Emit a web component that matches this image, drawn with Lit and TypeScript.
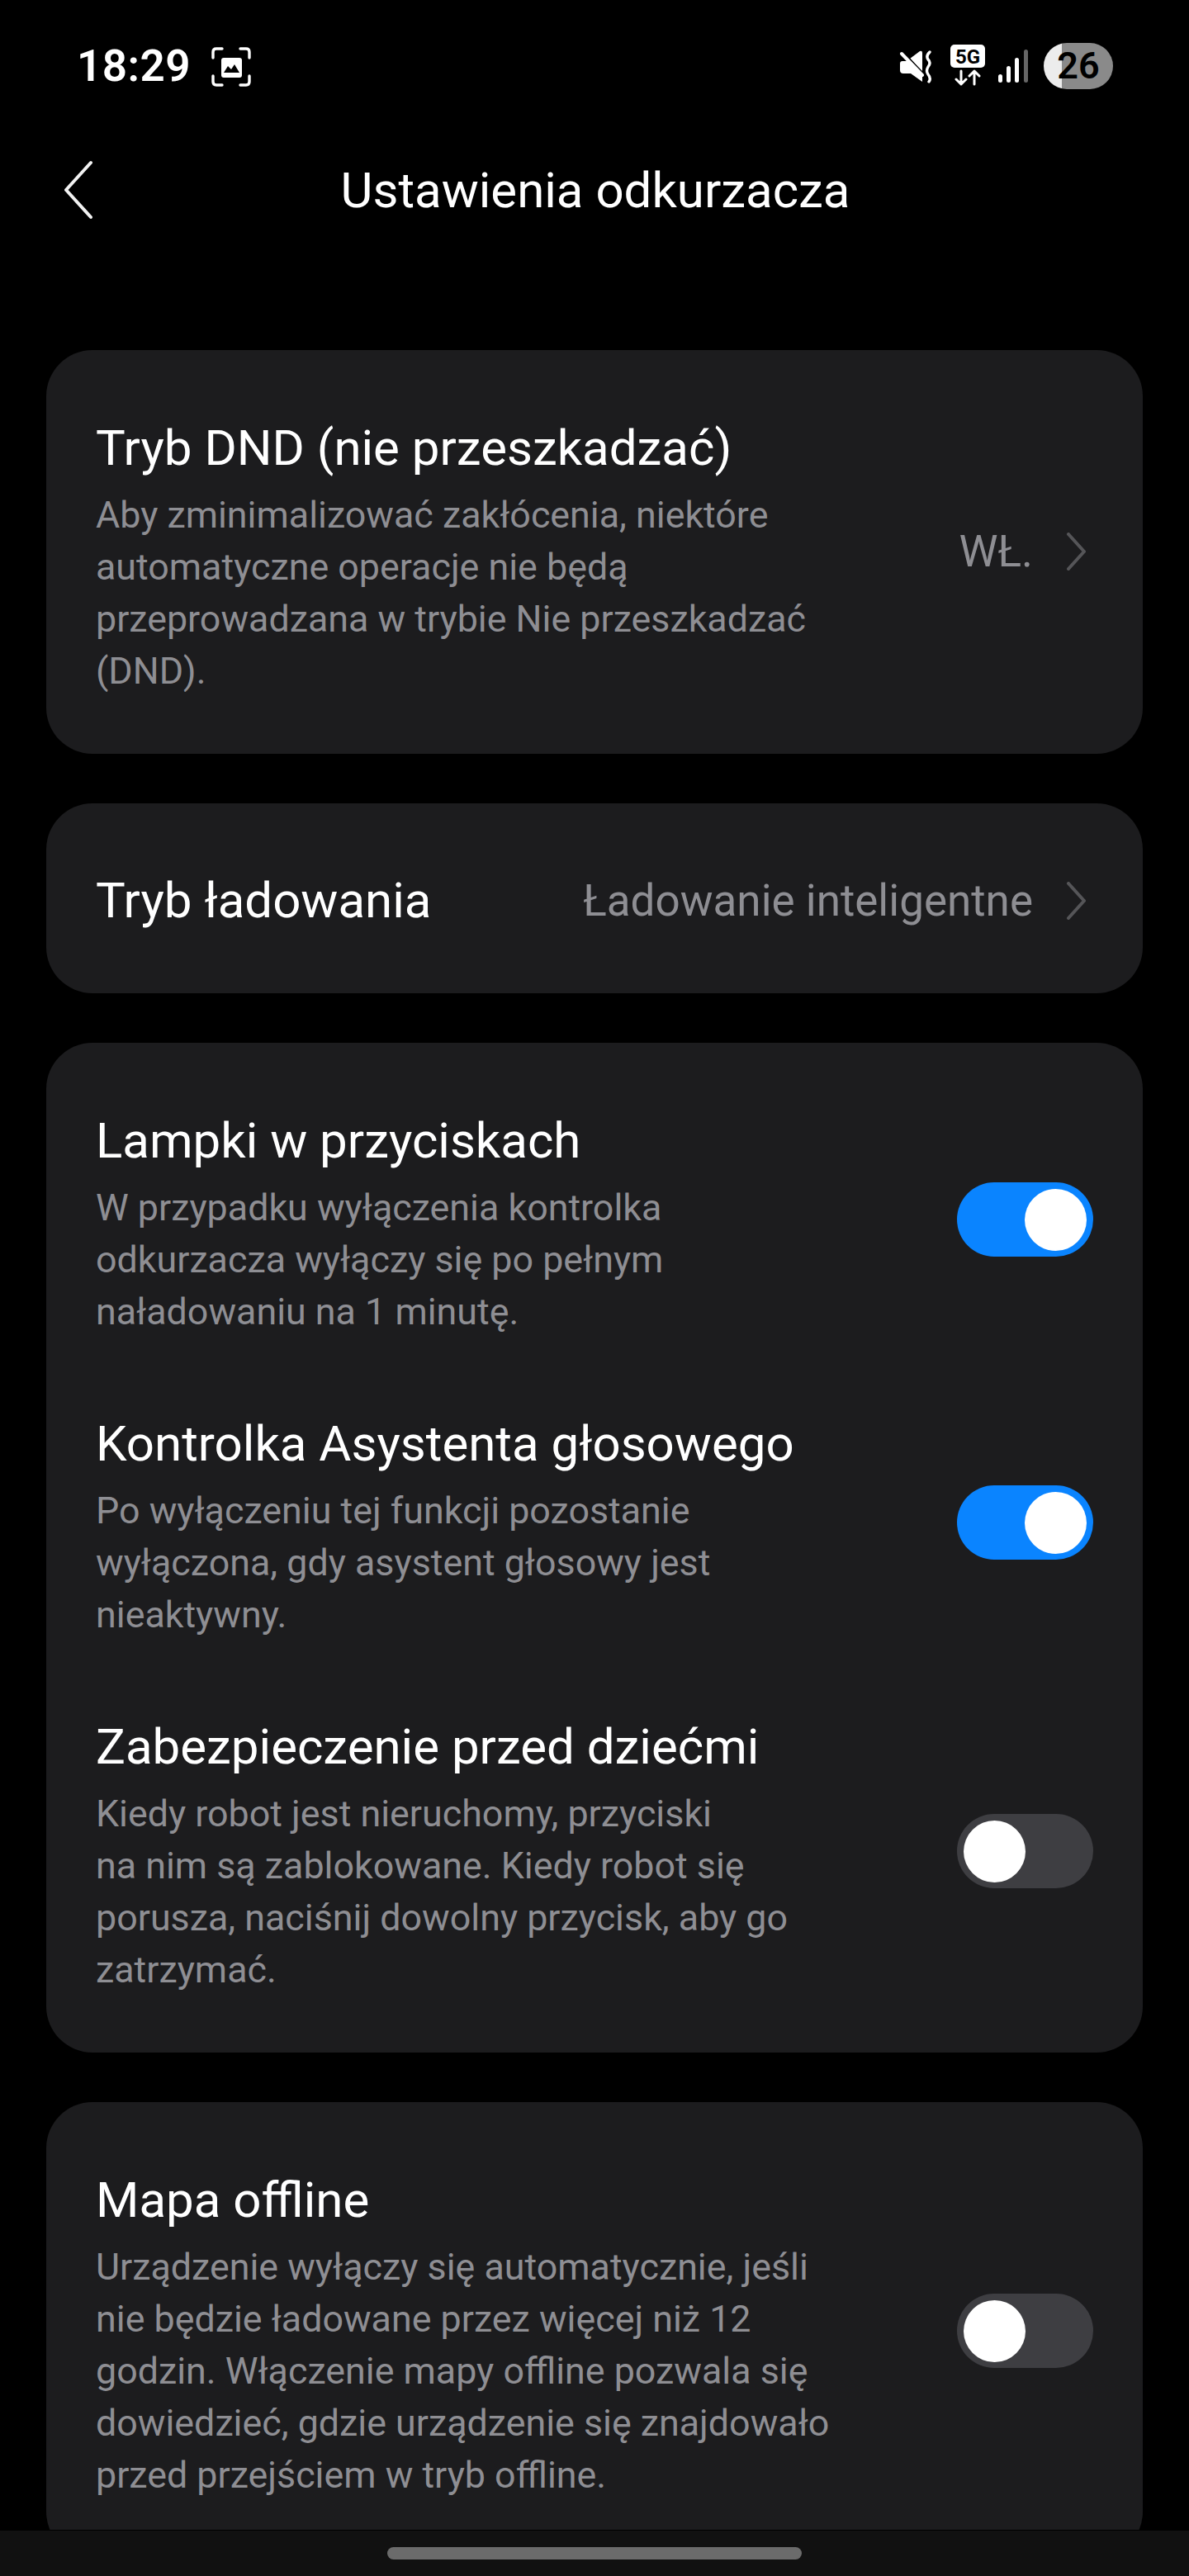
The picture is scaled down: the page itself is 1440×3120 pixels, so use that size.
import { LitElement, html, css, nothing } from "lit";
import { customElement } from "lit/decorators.js";

type Row = { title: string; desc?: string[]; value?: string; toggle?: boolean };

const cards: Row[][] = [
  [{ title: "Tryb DND (nie przeszkadzać)", desc: ["Aby zminimalizować zakłócenia, niektóre", "automatyczne operacje nie będą", "przeprowadzana w trybie Nie przeszkadzać", "(DND)."], value: "WŁ." }],
  [{ title: "Tryb ładowania", value: "Ładowanie inteligentne" }],
  [
    { title: "Lampki w przyciskach", desc: ["W przypadku wyłączenia kontrolka", "odkurzacza wyłączy się po pełnym", "naładowaniu na 1 minutę."], toggle: true },
    { title: "Kontrolka Asystenta głosowego", desc: ["Po wyłączeniu tej funkcji pozostanie", "wyłączona, gdy asystent głosowy jest", "nieaktywny."], toggle: true },
    { title: "Zabezpieczenie przed dziećmi", desc: ["Kiedy robot jest nieruchomy, przyciski", "na nim są zablokowane. Kiedy robot się", "porusza, naciśnij dowolny przycisk, aby go", "zatrzymać."], toggle: false },
  ],
  [{ title: "Mapa offline", desc: ["Urządzenie wyłączy się automatycznie, jeśli", "nie będzie ładowane przez więcej niż 12", "godzin. Włączenie mapy offline pozwala się", "dowiedzieć, gdzie urządzenie się znajdowało", "przed przejściem w tryb offline."], toggle: false }],
];

@customElement("app-root")
export class AppRoot extends LitElement {
  static styles = css`
    :host { display: block; width: 1440px; height: 3120px; background: #000; position: relative; overflow: hidden; font-family: Roboto, "Liberation Sans", sans-serif; color: #fff; }
    .status { height: 171px; display: flex; align-items: flex-start; padding: 52px 92px 0 93px; box-sizing: border-box; }
    .time { font-size: 53px; line-height: 56px; font-weight: 600; letter-spacing: 0.5px; }
    .shot { margin: 5px 0 0 25px; }
    .right { margin-left: auto; display: flex; align-items: flex-start; }
    .mute { margin: 9px 0 0 0; }
    .net { margin: 2px 0 0 21px; }
    .sig { margin: 8px 0 0 16px; }
    .batt { margin-left: 19px; width: 84px; height: 56px; border-radius: 28px; overflow: hidden; background: linear-gradient(90deg, #ececec 0 26%, #8a8a8a 26% 100%); color: #000; font-size: 45px; line-height: 56px; font-weight: 600; text-align: center; }
    .head { height: 120px; position: relative; display: flex; align-items: center; justify-content: center; padding-left: 2px; box-sizing: border-box; }
    .head .back { position: absolute; left: 76px; top: 23px; }
    .head h1 { margin: 0; font-size: 60px; line-height: 70px; font-weight: 400; color: #fff; }
    .list { padding: 133px 56px 0; display: flex; flex-direction: column; gap: 60px; }
    .card { background: #1c1c1e; border-radius: 56px; padding: 84px 60px 69px; display: flex; flex-direction: column; gap: 94px; }
    .card.compact { padding: 6px 60px 0; height: 230px; box-sizing: border-box; justify-content: center; }
    .row { display: flex; align-items: center; justify-content: space-between; }
    .title { font-size: 60px; line-height: 70px; color: #fff; white-space: nowrap; }
    .desc { margin-top: 14px; font-size: 44.8px; line-height: 63px; color: #8e8e93; white-space: nowrap; }
    .val { display: flex; align-items: center; flex: none; }
    .val.side { margin-top: -16px; }
    .val span { font-size: 53px; line-height: 60px; color: #8e8e93; white-space: nowrap; }
    .val svg { margin-left: 40px; margin-right: 9px; }
    .sw { flex: none; width: 165px; height: 90px; border-radius: 45px; background: #3e3e42; padding: 8px; box-sizing: border-box; display: flex; margin-top: -14px; }
    .sw.on { background: #0a84ff; justify-content: flex-end; }
    .knob { width: 75px; height: 75px; border-radius: 50%; background: #fff; }
    .nav { position: absolute; left: 0; right: 0; bottom: 0; height: 56px; background: #111; border-top: 1px solid #000; display: flex; justify-content: center; padding-top: 20px; box-sizing: border-box; }
    .pill { width: 502px; height: 15px; border-radius: 8px; background: #6b6b6b; }
  `;

  private chevron() {
    return html`<svg width="24" height="46" viewBox="0 0 24 46"><path d="M3 2 L22 23 L3 44" fill="none" stroke="#555558" stroke-width="4" stroke-linecap="round" stroke-linejoin="round"/></svg>`;
  }

  private row(r: Row) {
    return html`<div class="row">
      <div>
        <div class="title">${r.title}</div>
        ${r.desc ? html`<div class="desc">${r.desc.map((l) => html`<div>${l}</div>`)}</div>` : nothing}
      </div>
      ${r.value ? html`<div class="val ${r.desc ? "side" : ""}"><span>${r.value}</span>${this.chevron()}</div>` : nothing}
      ${r.toggle !== undefined ? html`<div class="sw ${r.toggle ? "on" : ""}"><div class="knob"></div></div>` : nothing}
    </div>`;
  }

  render() {
    return html`
      <div class="status">
        <div class="time">18:29</div>
        <svg class="shot" width="48" height="48" viewBox="0 0 48 48" fill="none">
          <path d="M2 13 V6 Q2 2 6 2 H13 M35 2 H42 Q46 2 46 6 V13 M46 35 V42 Q46 46 42 46 H35 M13 46 H6 Q2 46 2 42 V35" stroke="#fff" stroke-width="3.4" stroke-linecap="round"/>
          <rect x="12" y="13" width="25" height="24" rx="3" fill="#fff"/>
          <path d="M15 31 L20 23 L24 27 L28 21 L34 31 Z" fill="#000"/>
        </svg>
        <div class="right">
          <svg class="mute" width="40" height="40" viewBox="0 0 40 40">
            <path d="M0 16 Q0 13 3 13 H9 L27 31 V38 L13 28 H4 Q0 28 0 24 Z M12 10 L24 1 Q27 0 27 3 V25 Z" fill="#fff"/>
            <path d="M3 2 L30 32" stroke="#000" stroke-width="4"/>
            <path d="M2 4 L27 30" stroke="#fff" stroke-width="4" stroke-linecap="round"/>
            <path d="M36 2 Q31 7 34 11 Q38 15 34 20 Q31 25 34 29 Q38 34 35 38" fill="none" stroke="#fff" stroke-width="3.4" stroke-linecap="round"/>
          </svg>
          <svg class="net" width="42" height="50" viewBox="0 0 42 50">
            <rect width="42" height="28" rx="5" fill="#fff"/>
            <text x="21" y="23" text-anchor="middle" font-family="Roboto, sans-serif" font-weight="700" font-size="24" fill="#000">5G</text>
            <path d="M13 32 V48 M7 42 L13 48 L19 42 M29 48 V32 M23 38 L29 32 L35 38" fill="none" stroke="#fff" stroke-width="3" stroke-linecap="round" stroke-linejoin="round"/>
          </svg>
          <svg class="sig" width="36" height="40" viewBox="0 0 36 40">
            <rect x="0" y="30" width="5" height="10" rx="2.5" fill="#fff"/>
            <rect x="10" y="20" width="5" height="20" rx="2.5" fill="#fff"/>
            <rect x="20" y="10" width="5" height="30" rx="2.5" fill="#fff"/>
            <rect x="31" y="0" width="5" height="40" rx="2.5" fill="#666"/>
          </svg>
          <div class="batt">26</div>
        </div>
      </div>
      <div class="head">
        <svg class="back" width="40" height="72" viewBox="0 0 40 72"><path d="M34 3 L4 36 L34 69" fill="none" stroke="#f2f2f2" stroke-width="4" stroke-linecap="round" stroke-linejoin="round"/></svg>
        <h1>Ustawienia odkurzacza</h1>
      </div>
      <div class="list">
        ${cards.map((c) => html`<div class="card ${c.length === 1 && !c[0].desc ? "compact" : ""}">${c.map((r) => this.row(r))}</div>`)}
      </div>
      <div class="nav"><div class="pill"></div></div>
    `;
  }
}
